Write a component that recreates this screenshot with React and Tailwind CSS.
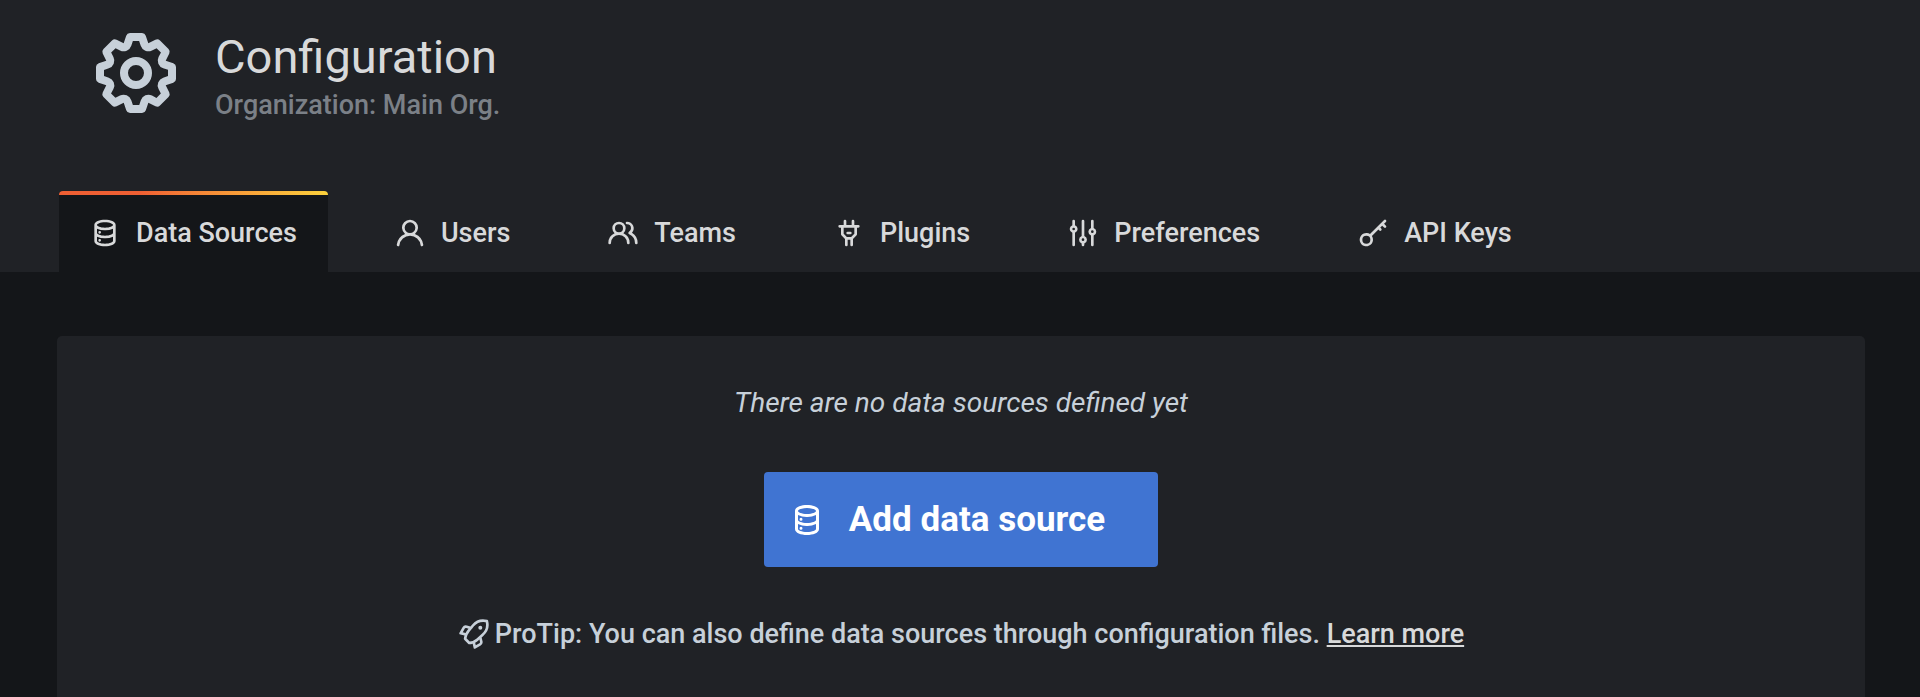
const ICONS = {
  cog: 'M21.32,9.55l-1.89-.63.89-1.78A1,1,0,0,0,20.13,6L18,3.87a1,1,0,0,0-1.15-.19l-1.78.89-.63-1.89A1,1,0,0,0,13.5,2h-3a1,1,0,0,0-.95.68L8.92,4.57,7.14,3.68A1,1,0,0,0,6,3.87L3.87,6a1,1,0,0,0-.19,1.15l.89,1.78-1.89.63A1,1,0,0,0,2,10.5v3a1,1,0,0,0,.68.95l1.89.63-.89,1.78A1,1,0,0,0,3.87,18L6,20.13a1,1,0,0,0,1.15.19l1.78-.89.63,1.89a1,1,0,0,0,.95.68h3a1,1,0,0,0,.95-.68l.63-1.89,1.78.89A1,1,0,0,0,18,20.13L20.13,18a1,1,0,0,0,.19-1.15l-.89-1.78,1.89-.63A1,1,0,0,0,22,13.5v-3A1,1,0,0,0,21.32,9.55ZM20,12.78l-1.2.4A2,2,0,0,0,17.64,16l.57,1.14-1.1,1.1L16,17.64a2,2,0,0,0-2.79,1.16l-.4,1.2H11.22l-.4-1.2A2,2,0,0,0,8,17.64l-1.14.57-1.1-1.1L6.36,16A2,2,0,0,0,5.2,13.18L4,12.78V11.22l1.2-.4A2,2,0,0,0,6.36,8L5.79,6.89l1.1-1.1L8,6.36A2,2,0,0,0,10.82,5.2l.4-1.2h1.56l.4,1.2A2,2,0,0,0,16,6.36l1.14-.57,1.1,1.1L17.64,8a2,2,0,0,0,1.16,2.79l1.2.4ZM12,8a4,4,0,1,0,4,4A4,4,0,0,0,12,8Zm0,6a2,2,0,1,1,2-2A2,2,0,0,1,12,14Z',
  database: 'M8,16.5a1,1,0,1,0,1,1A1,1,0,0,0,8,16.5ZM12,2C8,2,4,3.37,4,6V18c0,2.63,4,4,8,4s8-1.37,8-4V6C20,3.37,16,2,12,2Zm6,16c0,.71-2.28,2-6,2s-6-1.29-6-2V14.73A13.16,13.16,0,0,0,12,16a13.16,13.16,0,0,0,6-1.27Zm0-6c0,.71-2.28,2-6,2s-6-1.29-6-2V8.73A13.16,13.16,0,0,0,12,10a13.16,13.16,0,0,0,6-1.27ZM12,8C8.28,8,6,6.71,6,6s2.28-2,6-2,6,1.29,6,2S15.72,8,12,8ZM8,10.5a1,1,0,1,0,1,1A1,1,0,0,0,8,10.5Z',
  user: 'M15.71,12.71a6,6,0,1,0-7.42,0,10,10,0,0,0-6.22,8.18,1,1,0,0,0,2,.22,8,8,0,0,1,15.9,0,1,1,0,0,0,1,.89h.11a1,1,0,0,0,.88-1.1A10,10,0,0,0,15.71,12.71ZM12,12a4,4,0,1,1,4-4A4,4,0,0,1,12,12Z',
  users: 'M12.3,12.22A4.92,4.92,0,0,0,14,8.5a5,5,0,0,0-10,0,4.92,4.92,0,0,0,1.7,3.72A8,8,0,0,0,1,19.5a1,1,0,0,0,2,0,6,6,0,0,1,12,0,1,1,0,0,0,2,0A8,8,0,0,0,12.3,12.22ZM9,11.5a3,3,0,1,1,3-3A3,3,0,0,1,9,11.5Zm9.74.32A5,5,0,0,0,15,3.5a1,1,0,0,0,0,2,3,3,0,0,1,3,3,3,3,0,0,1-1.5,2.59,1,1,0,0,0-.5.84,1,1,0,0,0,.45.86l.39.26.13.07a7,7,0,0,1,4,6.38,1,1,0,0,0,2,0A9,9,0,0,0,18.74,11.82Z',
  plug: 'M19,6H16V3a1,1,0,0,0-2,0V6H10V3A1,1,0,0,0,8,3V6H5A1,1,0,0,0,5,8H6v5a1,1,0,0,0,.29.71L9,16.41V21a1,1,0,0,0,2,0V17h2v4a1,1,0,0,0,2,0V16.41l2.71-2.7A1,1,0,0,0,18,13V8h1a1,1,0,0,0,0-2Zm-3,6.59L13.59,15H10.41L8,12.59V8h8ZM11,13h2a1,1,0,0,0,0-2H11a1,1,0,0,0,0,2Z',
  sliders: 'M20,8.18V3a1,1,0,0,0-2,0V8.18a3,3,0,0,0,0,5.64V21a1,1,0,0,0,2,0V13.82a3,3,0,0,0,0-5.64ZM19,12a1,1,0,1,1,1-1A1,1,0,0,1,19,12Zm-6,2.18V3a1,1,0,0,0-2,0V14.18a3,3,0,0,0,0,5.64V21a1,1,0,0,0,2,0V19.82a3,3,0,0,0,0-5.64ZM12,18a1,1,0,1,1,1-1A1,1,0,0,1,12,18ZM6,6.18V3A1,1,0,0,0,4,3V6.18a3,3,0,0,0,0,5.64V21a1,1,0,0,0,2,0V11.82A3,3,0,0,0,6,6.18ZM5,10A1,1,0,1,1,6,9,1,1,0,0,1,5,10Z',
  key: 'M21.71,6.53,20.29,5.12l1.42-1.41a1,1,0,1,0-1.42-1.42L9.75,12.83A5,5,0,1,0,11.17,14.25l4.88-4.89.71.71a1,1,0,0,0,1.41,0,1,1,0,0,0,0-1.42l-.7-.7,1.41-1.42,1.42,1.41a1,1,0,0,0,1.41,0A1,1,0,0,0,21.71,6.53ZM7,20a3,3,0,1,1,3-3A3,3,0,0,1,7,20Z',
  rocket: 'M22.601 2.062a1 1 0 0 0-.713-.713A11.252 11.252 0 0 0 10.47 4.972L9.354 6.296 6.75 5.668a2.777 2.777 0 0 0-3.387 1.357l-2.2 3.9a1 1 0 0 0 .661 1.469l3.073.659a13.42 13.42 0 0 0-.555 2.434 1 1 0 0 0 .284.836l3.1 3.1a1 1 0 0 0 .708.293c.028 0 .057-.001.086-.004a12.169 12.169 0 0 0 2.492-.49l.644 3.004a1 1 0 0 0 1.469.661l3.905-2.202a3.035 3.035 0 0 0 1.375-3.304l-.668-2.76 1.237-1.137A11.204 11.204 0 0 0 22.6 2.062ZM3.572 10.723l1.556-2.76a.826.826 0 0 1 1.07-.375l1.718.416-.65.772a13.095 13.095 0 0 0-1.59 2.398Zm12.47 8.222-2.715 1.532-.43-2.005a11.34 11.34 0 0 0 2.414-1.62l.743-.683.404 1.664a1.041 1.041 0 0 1-.416 1.112Zm1.615-6.965-3.685 3.386a9.773 9.773 0 0 1-5.17 2.304l-2.405-2.404a10.932 10.932 0 0 1 2.401-5.206l1.679-1.993a.964.964 0 0 0 .078-.092L11.99 6.27a9.278 9.278 0 0 1 8.81-3.12 9.218 9.218 0 0 1-3.143 8.829Zm-.923-6.164a1.5 1.5 0 1 0 1.5 1.5 1.5 1.5 0 0 0-1.5-1.5Z',
};

const TABS = [
  { label: 'Data Sources', icon: 'database', active: true },
  { label: 'Users', icon: 'user' },
  { label: 'Teams', icon: 'users' },
  { label: 'Plugins', icon: 'plug' },
  { label: 'Preferences', icon: 'sliders' },
  { label: 'API Keys', icon: 'key' },
];

function Icon({ name, className }) {
  return (
    <svg viewBox="0 0 24 24" fill="currentColor" aria-hidden="true" className={className}>
      <path d={ICONS[name]} />
    </svg>
  );
}

function Tab({ label, icon, active }) {
  return (
    <li className={active ? 'overflow-hidden rounded-t bg-[#141619]' : ''}>
      <div className={active ? 'h-1 bg-linear-to-r from-[#ef5f33] from-30% to-[#fbd13c]' : 'h-1'} />
      <a
        href="#"
        aria-current={active ? 'page' : undefined}
        className="flex h-[77px] items-center gap-[15px] pr-[31px] pb-0.5 pl-[30px]"
      >
        <Icon name={icon} className="size-8 shrink-0" />
        {label}
      </a>
    </li>
  );
}

export default function App() {
  return (
    <div className="min-h-screen bg-[#141619] font-['Roboto',sans-serif] text-[27px] leading-9 font-medium text-[#c7d0d9]">
      <header className="bg-[#202226] px-[59px] text-[#d8d9da]">
        <div className="flex items-start gap-[31px] pt-[25px] pb-[68px] pl-[29px]">
          <Icon name="cog" className="size-24 shrink-0 text-[#c7d0d9]" />
          <div>
            <h1 className="pt-1 text-[47px] leading-[56px] font-normal">Configuration</h1>
            <p className="pt-0.5 text-[#7b8087]">Organization: Main Org.</p>
          </div>
        </div>
        <nav aria-label="Configuration">
          <ul className="flex gap-9">
            {TABS.map((tab) => (
              <Tab key={tab.label} {...tab} />
            ))}
          </ul>
        </nav>
      </header>
      <main className="pt-16 pr-[55px] pl-[57px]">
        <section className="flex flex-col items-center rounded-t-[5px] bg-[#202226] pt-[49px] pb-[45px]">
          <p className="text-[28px] font-normal italic">There are no data sources defined yet</p>
          <button
            type="button"
            className="mt-[51px] flex h-[95px] items-center gap-6 rounded bg-[#4074d2] pr-[53px] pl-[25px] text-[35px] font-bold text-white"
          >
            <Icon name="database" className="size-9 shrink-0" />
            Add data source
          </button>
          <p className="mt-[49px] flex items-center gap-[5px]">
            <Icon name="rocket" className="size-8 shrink-0" />
            <span>
              ProTip: You can also define data sources through configuration files.{' '}
              <a href="#" className="text-[#d8d9da] underline">
                Learn more
              </a>
            </span>
          </p>
        </section>
      </main>
    </div>
  );
}
